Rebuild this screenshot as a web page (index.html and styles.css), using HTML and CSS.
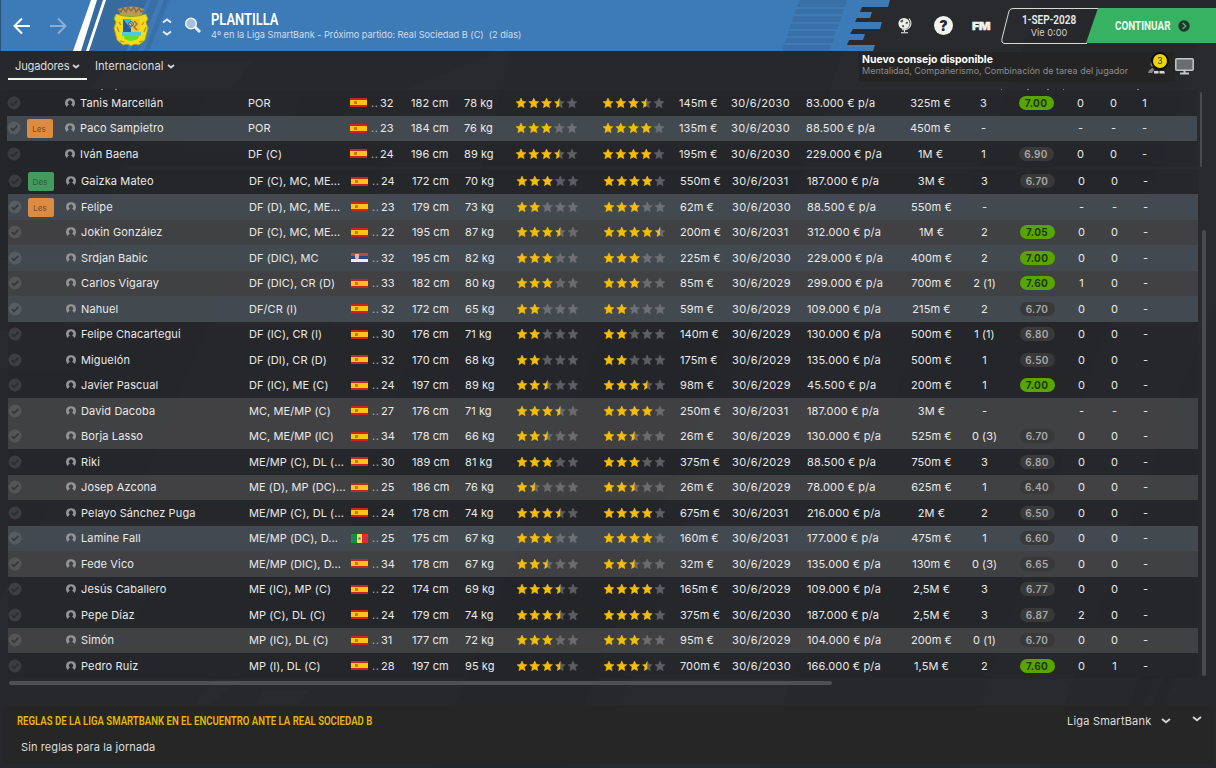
FILE: index.html
```html
<!DOCTYPE html>
<html lang="es">
<head>
<meta charset="utf-8">
<title>Plantilla</title>
<link rel="stylesheet" href="styles.css">
</head>
<body>
<div class="app">
  <svg class="backdrop" width="1216" height="768" viewBox="0 0 1216 768" aria-hidden="true">
    <g fill="#fff" fill-opacity=".012">
      <path d="M110 61H253L232 88H90zM340 115L500 51H511L440 330H330L400 115zM490 51H512L470 150H450zM860 0H1040L760 768H600zM1198 45H1216V300L1040 768H960zM205 97H300L280 150H180z"/>
      <path d="M0 260H120L80 370H0zM60 480H190L130 640H0V600zM215 678H240L212 704H196zM262 690H310L300 704H256zM230 270H440L340 560H110z"/>
    </g>
    <g fill="#000" fill-opacity=".045">
      <path d="M0 90H150L60 330H0zM600 340H730L560 768H430zM1140 676H1155L1143 705H1128zM1164 676H1175L1164 705H1153z"/>
    </g>
    <path fill="#bbb" fill-opacity=".6" d="M101 89h2v1h-2zM115 89h2v1h-2zM1001 89h1v1h-1zM1027 89h2v1h-2zM1047 89h2v1h-2zM1063 89h1v1h-1zM1137 89h2v1h-2z"/>
  </svg>

  <header class="topbar">
    <svg class="topbar-art" width="1216" height="51" viewBox="0 0 1216 51" aria-hidden="true">
      <path fill="#3d7ab8" d="M0 0H890L888 7H862L860 12H872L870 18H857L855 22H882L880 29H853L850 34H865L863 40H849L847 45H875L873 51H0z"/>
      <path fill="#376a9f" d="M97 0H147L126 51H81z"/>
      <path fill="#396fa7" d="M151 0H159L138 51H130zM164 0H169L149 51H144z"/>
      <path fill="#fff" d="M91 0H97L81 51H73zM103 0H106L89 51H86z"/>
      <g fill="#3a70a8"><path d="M800 0H847L845 7H797zM796 9H844L842 14H794zM794 16H842L840 22H792zM791 24H839L837 29H789zM789 31H836L834 36H787zM787 38H834L832 43H784zM784 45H832L829 51H782z"/></g>
      <path fill="#2d5277" d="M0 0H1V51H0z"/>
    </svg>
    <svg class="nav back" width="18" height="18" viewBox="0 0 18 18"><path d="M17 9H2M9 1.5L1.5 9L9 16.500"/></svg>
    <svg class="nav fwd" width="18" height="18" viewBox="0 0 18 18"><path d="M1 9H16M9 1.500L16.500 9L9 16.500"/></svg>
    <svg class="crest" width="38" height="42" viewBox="0 0 38 42" aria-hidden="true">
      <path d="M6 4Q19-1 32 4L29 11H9z" fill="#b89d58"/>
      <path d="M7 5l2 2 2-4 3 4 2-5 3 4 3-4 2 5 3-4 2 4 2-2" fill="none" stroke="#8d6b43" stroke-width="1.500"/>
      <path d="M4 9Q19 14 34 9L36 14L34 17L36 23L33 35L27 40Q22 38 19 41Q16 38 11 40L5 35L2 23L4 17L2 14z" fill="#f4dc19" stroke="#a39a2c" stroke-width="1"/>
      <path d="M11 14H19V27H11z" fill="#35b8e8"/><path d="M11 14L19 24V27H11z" fill="#285a9f"/>
      <path d="M19 14H28V27H19z" fill="#edc43a"/><path d="M22 16l3 3-3 3 3 3" fill="none" stroke="#a37528" stroke-width="1.500"/>
      <circle cx="19" cy="19" r="2.300" fill="#dad8c4" stroke="#4a4656"/><path d="M18 18l2 1-1 2" fill="none" stroke="#c34336"/>
      <path d="M10 27H29V31H10z" fill="#4ccce0"/><path d="M12 31H27Q27 35 19 36Q11 35 12 31" fill="#60e129"/>
      <path d="M8 36l4 1M27 37l4-1M5 22l2 5M32 27l2-5M7 17l2 3M30 20l2-3" stroke="#b58f1c" stroke-width="1.200"/>
    </svg>
    <svg class="updown" width="10" height="18" viewBox="0 0 10 18"><path d="M1 4.500L5 1.500L9 4.500M1 13.500L5 16.500L9 13.500"/></svg>
    <svg class="search" width="18" height="17" viewBox="0 0 18 17"><path d="M10.500 9.500L16 15" stroke="#e9eef4" stroke-width="3"/><circle cx="7" cy="6.500" r="5.300" fill="#a5c0dc" stroke="#eef3f8" stroke-width="1.500"/></svg>
    <div class="title">
      <h1>PLANTILLA</h1>
      <p>4º en la Liga SmartBank - Próximo partido: Real Sociedad B (C)&nbsp; (2 días)</p>
    </div>
    <div class="tools">
      <svg class="globe" width="16" height="17" viewBox="0 0 16 17"><circle cx="7" cy="6.500" r="5.600" fill="#f0f0ea"/><path d="M3.500 3.500l2-1 1 1.500-1.500 1.500-1.500-.5zM8.500 5.500l2-1 .5 1.500-1.500 1.500zM4.500 8.500l2-.5 1 1.500-1.500 1z" fill="#55565a"/><path d="M12 1.500Q15 5 13.300 9Q11 13.500 5 12.700M7.500 13v2M4 15.700h7" fill="none" stroke="#f0f0ea" stroke-width="1.100"/></svg>
      <span class="help">?</span>
      <span class="fm">FM</span>
    </div>
    <div class="date">
      <svg width="98" height="36" viewBox="0 0 98 36" aria-hidden="true"><path d="M97 .5H12Q9 .5 8 3L.9 31Q0 35 3 35.500H86"/></svg>
      <strong>1-SEP-2028</strong><span>Vie 0:00</span>
    </div>
    <div class="continue"><b>CONTINUAR</b><svg width="12" height="12" viewBox="0 0 12 12"><circle cx="6" cy="6" r="5.700" fill="#26352b"/><path d="M4.700 3L7.700 6L4.700 9" fill="none" stroke="#39b765" stroke-width="1.600"/></svg></div>
  </header>

  <nav class="tabs">
    <span class="tab active">Jugadores <svg width="8" height="5" viewBox="0 0 8 5"><path d="M1 1l3 2.500L7 1"/></svg></span>
    <span class="tab">Internacional <svg width="8" height="5" viewBox="0 0 8 5"><path d="M1 1l3 2.500L7 1"/></svg></span>
    <div class="advice">
      <div class="advice-text"><b>Nuevo consejo disponible</b><span>Mentalidad, Compañerismo, Combinación de tarea del jugador</span></div>
      <div class="people">
        <svg width="20" height="16" viewBox="0 0 20 16"><g fill="#85868a"><circle cx="5" cy="5" r="2.500"/><path d="M0 14q1-4 5-5l1 2-2 3z"/></g><path fill="#d8d8d8" d="M6 14.500v-2.500h4.500v2.500zM11.500 14.500v-2.500h4.500l1 2.500z"/></svg>
        <span class="count">3</span>
      </div>
    </div>
    <svg class="monitor" width="19" height="17" viewBox="0 0 19 17"><rect x=".8" y=".8" width="17.400" height="11.500" rx="1" fill="#6b6c6f" stroke="#c5c6c6" stroke-width="1.500"/><path d="M9.500 12v3M5 15.500h9" stroke="#c5c6c6" stroke-width="2"/></svg>
  </nav>

  <main class="squad">
    <div class="rows pinned" id="pinned"></div>
    <div class="rows" id="players"></div>
    <div class="vbar pinned-bar"></div>
    <div class="vbar main-bar"></div>
    <div class="hbar"></div>
  </main>

  <section class="rules">
    <div class="rules-head">
      <h2>REGLAS DE LA LIGA SMARTBANK EN EL ENCUENTRO ANTE LA REAL SOCIEDAD B</h2>
      <div class="select">Liga SmartBank <svg width="10" height="6" viewBox="0 0 10 6"><path d="M1 1l4 3.300L9 1"/></svg></div>
      <svg class="collapse" width="10" height="6" viewBox="0 0 10 6"><path d="M1 1l4 3.300L9 1"/></svg>
    </div>
    <p>Sin reglas para la jornada</p>
  </section>
</div>
<script src="script.js"></script>
</body>
</html>
```
FILE: styles.css
```css
* { box-sizing: border-box; }
body { margin: 0; background: #27282c; font-family: Inter, "Liberation Sans", sans-serif; color: #e9e9e9; }
h1, h2, p { margin: 0; }
.app { position: relative; width: 1216px; height: 768px; overflow: hidden; display: flex; flex-direction: column; isolation: isolate; }
.backdrop { position: absolute; inset: 0; z-index: -1; }

.topbar { position: relative; height: 51px; flex: none; display: flex; align-items: flex-start; }
.topbar-art { position: absolute; inset: 0; z-index: -1; }
.nav { margin-top: 17px; fill: none; stroke: #fff; stroke-width: 2; }
.back { margin-left: 13px; }
.fwd { margin-left: 18px; opacity: .4; }
.crest { margin: 5px 0 0 45px; }
.updown { margin: 18px 0 0 12px; fill: none; stroke: #e6edf5; stroke-width: 2; }
.search { margin: 17px 0 0 12px; }
.title { margin: 11px 0 0 9px; width: 400px; }
.title h1 { font: 600 16.5px/17px Roboto, sans-serif; transform: scaleX(.785); transform-origin: 0 0; color: #fff; }
.title p { font-size: 9.2px; letter-spacing: -.02px; line-height: 12px; color: #cfdded; margin-top: 1px; white-space: nowrap; }
.tools { margin-left: 286px; display: flex; align-items: center; height: 51px; width: 104px; flex: none; }
.help { margin-left: 21px; width: 19px; height: 19px; border-radius: 50%; background: #f4f4ee; color: #26272b; font: 900 14px/19px Inter, sans-serif; text-align: center; }
.fm { margin-left: 19px; font: 900 11px/14px Inter, sans-serif; color: #f4f4ee; letter-spacing: -.3px; transform: scaleX(1.12); transform-origin: 0 50%; -webkit-text-stroke: .4px #f4f4ee; }
.date { position: relative; width: 96px; height: 36px; margin-top: 8px; flex: none; display: flex; flex-direction: column; align-items: center; }
.date svg { position: absolute; left: 0; top: 0; fill: none; stroke: #d9d9d4; }
.date strong { font: 600 13px/15px Roboto, sans-serif; transform: scaleX(.77); margin-top: 4px; }
.date span { font-size: 9.2px; line-height: 11px; color: #d2d2d2; }
.continue { margin: 8px 0 0 -11px; width: 130px; height: 35px; flex: none; background: #36b262; clip-path: polygon(12px 0, 100% 0, 100% 100%, 0 100%); display: flex; align-items: center; padding-left: 29px; }
.continue b { font: 700 13px/16px Roboto, sans-serif; color: #eefbf2; width: 63px; transform: scaleX(.76); transform-origin: 0 50%; }
.continue svg { flex: none; }

.tabs { height: 39px; flex: none; display: flex; align-items: flex-start; padding-left: 8px; }
.tab { height: 29px; padding: 8px 8px 0 8px; font-size: 11.2px; line-height: 15px; white-space: nowrap; color: #dcdcdc; }
.tab.active { width: 79px; padding: 8px 0 0 7px; letter-spacing: -.2px; border-bottom: 2px solid #f2f2ea; }
.tab svg, .select svg, .collapse { fill: none; stroke: #d5d5d5; stroke-width: 1.800; }
.tab svg { margin-bottom: 1px; }
.advice { margin: 1px 0 0 auto; width: 316px; height: 30px; background: #242424; display: flex; padding-left: 3px; }
.advice-text { width: 286px; display: flex; flex-direction: column; padding-top: 3px; font-size: 9px; line-height: 10px; white-space: nowrap; }
.advice-text b { font-size: 10.4px; color: #fff; }
.advice-text span { color: #8d8d8d; padding-top: 1px; }
.people { position: relative; width: 24px; padding-top: 7px; }
.count { position: absolute; left: 3px; top: 0; width: 18px; height: 18px; border-radius: 50%; background: #ead507; border: 2px solid #0c0c0c; color: #43400f; font-size: 8.500px; line-height: 14px; text-align: center; }
.monitor { margin: 7px 22px 0 0; }

.squad { position: relative; height: 615px; flex: none; }
.rows { padding-left: 8px; }
.rows.pinned { padding-left: 7px; height: 78.5px; }
.row { width: 1190px; height: 25.5px; display: grid; align-items: center; font-size: 11px; letter-spacing: .07px; white-space: nowrap;
  grid-template-columns: 20px 38px 15px 168px 102px 21px 9px 31px 53px 51px 87px 77px 52px 75px 96px 56px 50px 56px 32px 34px 28px; }
.row.blue { background: rgba(72, 79, 86, .85); }
.row.gray { background: rgba(69, 69, 71, .85); }
.row.dark { background: rgba(34, 35, 38, .5); }
.row > svg { display: block; }
.check { width: 14px; height: 14px; }
.badge { width: 26px; height: 19px; margin-top: 1px; border-radius: 2px; font-size: 8px; line-height: 20px; padding-right: 2px; text-align: center; color: #6a4f33; background: #dd8a43; }
.badge.rest { background: #449a5d; color: #2a5a3c; }
.name { letter-spacing: .13px; }
.expires { letter-spacing: .35px; }
.wage { letter-spacing: .15px; }
.center { text-align: center; padding-left: 1px; }
.dots { color: #aaa; font-size: 11px; letter-spacing: .5px; }
.pill { width: 35px; height: 14px; border-radius: 7px; justify-self: center; background: #393939; color: #a9a9a9; font-size: 10px; line-height: 14px; font-weight: 600; letter-spacing: .35px; text-align: center; }
.pill.good { background: #58a500; color: #1d3a02; font-weight: 700; }
.vbar { position: absolute; background: #4a4a4d; border-radius: 2px; }
.pinned-bar { left: 1200px; top: 2px; width: 2px; height: 75px; }
.main-bar { left: 1202px; top: 140px; width: 4px; height: 446px; }
.hbar { position: absolute; left: 9px; top: 591px; width: 823px; height: 4px; border-radius: 2px; background: #505053; }

.rules { margin: 0 3px; height: 59px; background: #252625; border-radius: 4px; padding-left: 14px; }
.rules-head { display: flex; height: 31px; align-items: center; }
.rules h2 { font: 600 12.3px/16px Roboto, sans-serif; color: #e3b80a; transform: scaleX(.78); transform-origin: 0 50%; white-space: nowrap; width: 1050px; padding-top: 1px; }
.select { font-size: 11px; letter-spacing: .2px; color: #dedede; display: flex; align-items: center; gap: 10px; white-space: nowrap; }
.collapse { margin: -4px 0 0 21px; }
.rules p { font-size: 11px; line-height: 14px; letter-spacing: .1px; padding: 4px 0 0 4px; color: #dedede; }
```
FILE: script.js
```js
// tone | status | name | position | flag | age | height | weight | ability | potential | value | expires | wage | asking | apps | rating | goals | assists | motm
const pinned = `dark||Tanis Marcellán|POR|es|32|182|78|3.5|3.5|145m|30/6/2030|83.000|325m|3|7.00|0|0|1
blue|Les|Paco Sampietro|POR|es|23|184|76|3|4|135m|30/6/2030|88.500|450m|-||-|-|-
dark||Iván Baena|DF (C)|es|24|196|89|3.5|4|195m|30/6/2030|229.000|1M|1|6.90|0|0|-`;
const players = `dark|Des|Gaizka Mateo|DF (C), MC, ME...|es|24|172|70|3|4|550m|30/6/2031|187.000|3M|3|6.70|0|0|-
blue|Les|Felipe|DF (D), MC, ME...|es|23|179|73|2|3|62m|30/6/2030|88.500|550m|-||-|-|-
gray||Jokin González|DF (C), MC, ME...|es|22|195|87|3.5|4.5|200m|30/6/2031|312.000|1M|2|7.05|0|0|-
blue||Srdjan Babic|DF (DIC), MC|rs|32|195|82|3|3|225m|30/6/2030|229.000|400m|2|7.00|0|0|-
gray||Carlos Vigaray|DF (DIC), CR (D)|es|33|182|80|3|3|85m|30/6/2029|299.000|700m|2 (1)|7.60|1|0|-
blue||Nahuel|DF/CR (I)|es|32|172|65|2|2|59m|30/6/2029|109.000|215m|2|6.70|0|0|-
dark||Felipe Chacartegui|DF (IC), CR (I)|es|30|176|71|2|2|140m|30/6/2029|130.000|500m|1 (1)|6.80|0|0|-
dark||Miguelón|DF (DI), CR (D)|es|32|170|68|2|2|175m|30/6/2029|135.000|500m|1|6.50|0|0|-
dark||Javier Pascual|DF (IC), ME (C)|es|24|197|89|2.5|3.5|98m|30/6/2029|45.500|200m|1|7.00|0|0|-
gray||David Dacoba|MC, ME/MP (C)|es|27|176|71|3.5|4|250m|30/6/2031|187.000|3M|-||-|-|-
gray||Borja Lasso|MC, ME/MP (IC)|es|34|178|66|2.5|2.5|26m|30/6/2029|130.000|525m|0 (3)|6.70|0|0|-
dark||Riki|ME/MP (C), DL (...|es|30|189|81|3|3|375m|30/6/2029|88.500|750m|3|6.80|0|0|-
gray||Josep Azcona|ME (D), MP (DC)...|es|25|186|76|1.5|2.5|26m|30/6/2029|78.000|625m|1|6.40|0|0|-
dark||Pelayo Sánchez Puga|ME/MP (C), DL (...|es|24|178|74|3.5|4|675m|30/6/2031|216.000|2M|2|6.50|0|0|-
blue||Lamine Fall|ME/MP (DC), D...|sn|25|175|67|3|4|160m|30/6/2031|177.000|475m|1|6.60|0|0|-
gray||Fede Vico|ME/MP (DIC), D...|es|34|178|67|2.5|2.5|32m|30/6/2029|135.000|130m|0 (3)|6.65|0|0|-
dark||Jesús Caballero|ME (IC), MP (C)|es|22|174|69|3.5|4|165m|30/6/2029|109.000|2,5M|3|6.77|0|0|-
dark||Pepe Díaz|MP (C), DL (C)|es|24|179|74|3.5|4|375m|30/6/2030|187.000|2,5M|3|6.87|2|0|-
gray||Simón|MP (IC), DL (C)|es|31|177|72|3|3|95m|30/6/2029|104.000|200m|0 (1)|6.70|0|0|-
dark||Pedro Ruiz|MP (I), DL (C)|es|28|197|95|3.5|3.5|700m|30/6/2030|166.000|1,5M|2|7.60|0|1|-`;

const flags = {
  es: '<path fill="#cf1f27" d="M0 0h17v9H0z"/><path fill="#f8c513" d="M0 2h17v5H0z"/><path fill="#c47a1c" d="M4 3h3v3H4z"/>',
  rs: '<path fill="#c8404a" d="M0 0h17v3H0z"/><path fill="#234a86" d="M0 3h17v3H0z"/><path fill="#eee" d="M0 6h17v3H0z"/><path fill="#e5b5ae" d="M4 1h4v4l-2 2-2-2z"/>',
  sn: '<path fill="#178a4d" d="M0 0h6v9H0z"/><path fill="#f3e04a" d="M6 0h5v9H6z"/><path fill="#df2b3a" d="M11 0h6v9h-6z"/><path fill="#3a8a3c" d="M7.500 3.500h2v2h-2z"/>'
};
const starPath = 'M5 0L6.500 3.300L10 3.700L7.400 6.100L8.100 9.700L5 7.900L1.900 9.700L2.600 6.100L0 3.700L3.500 3.300Z';
const halfPath = 'M5 0V7.900L1.900 9.700L2.600 6.100L0 3.700L3.500 3.300Z';

function stars(n) {
  let out = '';
  for (let i = 0; i < 5; i++) {
    const at = `transform="translate(${1 + i * 12.75} 1)"`;
    const full = i + 1 <= n;
    const color = full ? '#f5bd08' : '#98989c';
    out += `<path ${at} d="${starPath}" fill="${color}" stroke="${color}" stroke-width=".5" opacity="${full ? 1 : .5}"/>`;
    if (n - i === .5) out += `<path ${at} d="${halfPath}" fill="#f5bd08"/>`;
  }
  return `<svg width="64" height="12">${out}</svg>`;
}

function row(line) {
  const [tone, status, name, pos, flag, age, h, w, ca, pa, value, expires, wage, ask, apps, rating, g, a, m] = line.split('|');
  return `<div class="row ${tone}">
    <svg class="check" viewBox="0 0 14 14"><circle cx="7" cy="7" r="6.500" fill="#fff" fill-opacity=".11"/><path d="M3.800 7.200L6 9.300L10.300 4.900" fill="none" stroke="#222326" stroke-opacity=".6" stroke-width="1.700"/></svg>
    <span>${status ? `<div class="badge ${status === 'Des' ? 'rest' : ''}">${status}</div>` : ''}</span>
    <svg width="10" height="10" viewBox="0 0 10 10"><path d="M1.600 9Q0 7.500 0 5Q0 .3 5 .3T10 5Q10 7.500 8.400 9L7 7.300Q6.500 6.700 6 6.500A2.100 2.100 0 1 0 4 6.500Q3.500 6.700 3 7.300Z" fill="#929496"/></svg>
    <span class="name">${name}</span><span>${pos}</span>
    <svg width="17" height="9" viewBox="0 0 17 9">${flags[flag]}</svg>
    <span class="dots">..</span><span>${age}</span><span>${h} cm</span><span>${w} kg</span>
    ${stars(+ca)}${stars(+pa)}
    <span>${value} €</span><span class="expires">${expires}</span><span class="wage">${wage} € p/a</span>
    <span class="center">${ask} €</span><span class="center">${apps}</span>
    ${rating ? `<span class="pill ${+rating >= 7 ? 'good' : ''}">${rating}</span>` : '<span></span>'}
    <span class="center">${g}</span><span class="center">${a}</span><span class="center">${m}</span>
  </div>`;
}

document.getElementById('pinned').innerHTML = pinned.split('\n').map(row).join('');
document.getElementById('players').innerHTML = players.split('\n').map(row).join('');
```
